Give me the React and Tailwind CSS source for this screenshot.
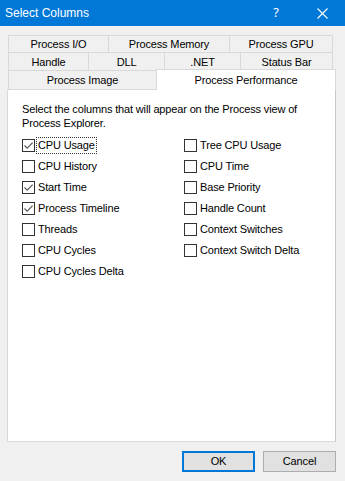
import { useState } from "react";

const tabRows = [
  [
    { label: "Process I/O", w: 100 },
    { label: "Process Memory", w: 121 },
    { label: "Process GPU", w: 104 },
  ],
  [
    { label: "Handle", w: 80 },
    { label: "DLL", w: 76 },
    { label: ".NET", w: 76 },
    { label: "Status Bar", w: 93 },
  ],
];

const leftCols = [
  { label: "CPU Usage", checked: true, focus: true },
  { label: "CPU History", checked: false },
  { label: "Start Time", checked: true },
  { label: "Process Timeline", checked: true },
  { label: "Threads", checked: false },
  { label: "CPU Cycles", checked: false },
  { label: "CPU Cycles Delta", checked: false },
];

const rightCols = [
  { label: "Tree CPU Usage", checked: false },
  { label: "CPU Time", checked: false },
  { label: "Base Priority", checked: false },
  { label: "Handle Count", checked: false },
  { label: "Context Switches", checked: false },
  { label: "Context Switch Delta", checked: false },
];

function CheckRow({ item, onToggle }) {
  return (
    <div className="flex items-center h-[21px] cursor-default" onClick={onToggle}>
      <span className="w-[13px] h-[13px] border border-[#333333] bg-white flex items-center justify-center shrink-0">
        {item.checked && (
          <svg width="11" height="11" viewBox="0 0 11 11">
            <path d="M1.5 5.5 L4.2 8.2 L9.6 2.6" fill="none" stroke="#555555" strokeWidth="1.1" />
          </svg>
        )}
      </span>
      <span
        className={
          "ml-[2px] px-[1px] leading-[15px] " +
          (item.focus ? "outline outline-1 outline-dotted outline-[#333333]" : "")
        }
      >
        {item.label}
      </span>
    </div>
  );
}

export default function App() {
  const [left, setLeft] = useState(leftCols);
  const [right, setRight] = useState(rightCols);

  function toggle(list, setList, i) {
    setList(list.map((it, j) => (j === i ? { ...it, checked: !it.checked } : it)));
  }

  return (
    <div
      className="w-[345px] h-[481px] bg-[#f0f0f0] flex flex-col text-[11px] tracking-[-0.15px] text-black"
      style={{ fontFamily: '"Liberation Sans", Arial, sans-serif' }}
    >
      {/* title bar */}
      <div className="h-[26px] bg-[#0078d7] flex items-center text-white shrink-0 tracking-normal">
        <span className="ml-[5px] text-[12px] flex-1">Select Columns</span>
        <span className="w-[46px] text-center text-[13px]" style={{ fontFamily: '"Noto Sans", sans-serif' }}>?</span>
        <span className="w-[46px] flex items-center justify-center">
          <svg width="11" height="11" viewBox="0 0 11 11">
            <path d="M0.5 0.5 L10.5 10.5 M10.5 0.5 L0.5 10.5" stroke="white" strokeWidth="1.1" />
          </svg>
        </span>
      </div>

      {/* tabs */}
      <div className="mt-[9px] ml-[8px] flex flex-col">
        {tabRows.map((row, r) => (
          <div key={r} className={"flex h-[18px] w-[325px] border-[#d9d9d9] border-b " + (r === 0 ? "border-t" : "")}>
            {row.map((t, i) => (
              <div
                key={t.label}
                style={{ width: t.w }}
                className={"flex items-center justify-center pt-[1px] border-[#d9d9d9] border-l " + (i === row.length - 1 ? "border-r" : "")}
              >
                {t.label}
              </div>
            ))}
          </div>
        ))}
        <div className="flex h-[18px] items-end">
          <div className="w-[148px] h-[18px] flex items-center justify-center pt-[1px] border-l border-[#d9d9d9]">
            Process Image
          </div>
          <div className="relative z-10 w-[180px] h-[21px] -mb-[1px] bg-white border border-b-0 border-[#d9d9d9] flex items-start justify-center pt-[2px]">
            Process Performance
          </div>
        </div>
      </div>

      {/* panel */}
      <div className="ml-[7px] w-[329px] h-[353px] bg-white border border-[#d9d9d9] border-r-[#c8c8c8] pl-[14px] pt-[12px]">
        <p className="leading-[14px] pr-[20px]">
          Select the columns that will appear on the Process view of Process Explorer.
        </p>
        <div className="mt-[5px] grid grid-cols-[162px_1fr]">
          <div className="flex flex-col">
            {left.map((it, i) => (
              <CheckRow key={it.label} item={it} onToggle={() => toggle(left, setLeft, i)} />
            ))}
          </div>
          <div className="flex flex-col">
            {right.map((it, i) => (
              <CheckRow key={it.label} item={it} onToggle={() => toggle(right, setRight, i)} />
            ))}
          </div>
        </div>
      </div>

      {/* buttons */}
      <div className="mt-[9px] flex justify-end gap-[8px] pr-[9px]">
        <button className="w-[73px] h-[21px] bg-[#e1e1e1] border-2 border-[#0078d7] text-[11px]">OK</button>
        <button className="w-[73px] h-[21px] bg-[#e1e1e1] border border-[#adadad] text-[11px]">Cancel</button>
      </div>
    </div>
  );
}
